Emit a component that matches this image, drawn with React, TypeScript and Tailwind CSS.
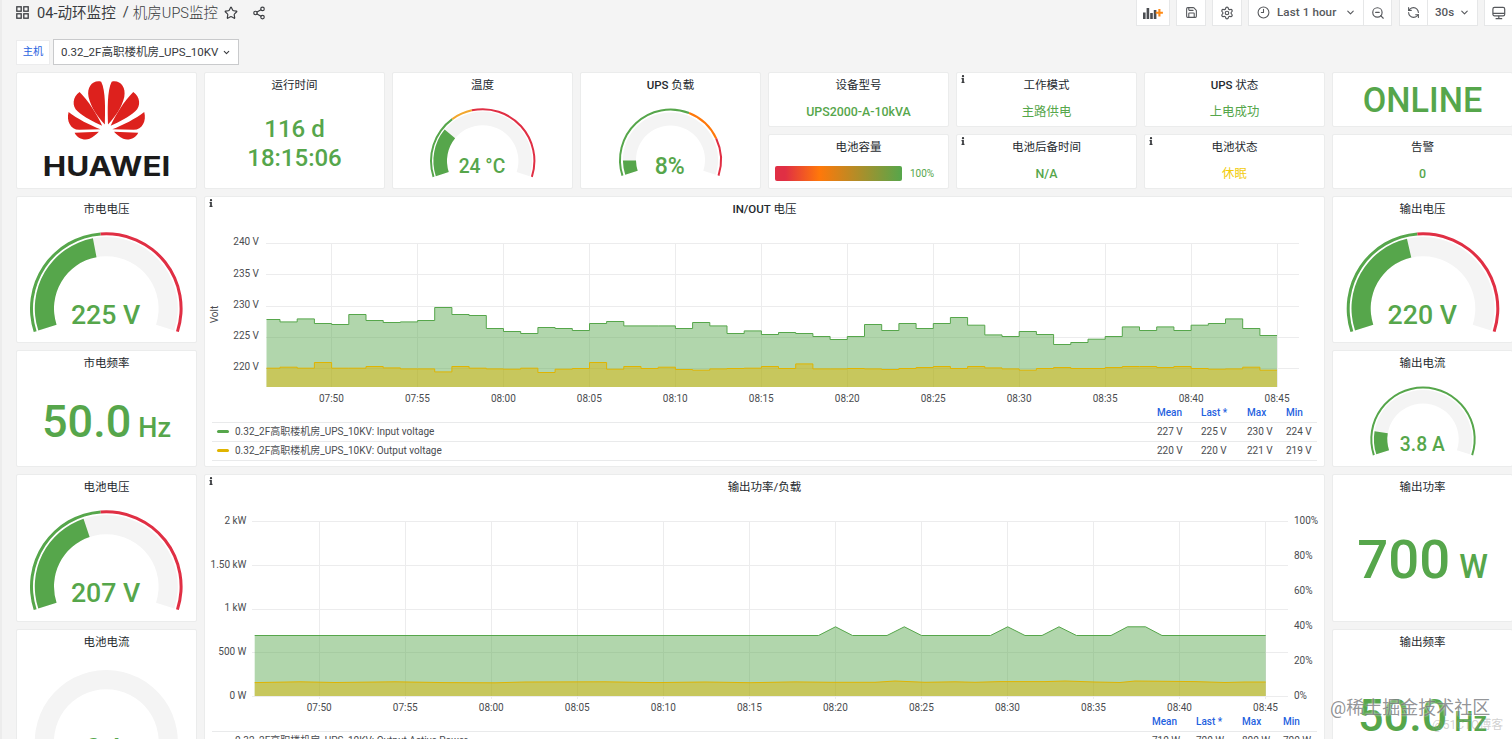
import React from 'react';
import { ChevronDown, Clock9, RefreshCcw, Save, Settings, Share2, Star, ZoomOut } from 'lucide-react';
import { FaInfo } from 'react-icons/fa';

const GREEN = '#56a64b';
const YELLOW = '#e0b400';
const ORANGE = '#ff780a';
const RED = '#e02f44';

interface PanelProps {
  title?: React.ReactNode;
  info?: boolean;
  className: string;
  children: React.ReactNode;
}

const Panel: React.FC<PanelProps> = ({ title, info, className, children }) => (
  <div className={`relative flex flex-col overflow-hidden rounded-[2px] border border-[#ebecec] bg-white ${className}`}>
    {info && <FaInfo className="absolute left-[2px] top-[2px] h-2 w-2 text-[#3b3d40]" />}
    {title && (
      <div className="flex h-[25px] shrink-0 items-center justify-center whitespace-pre pb-px text-[11.5px] leading-4 text-[#24292e]">
        {title}
      </div>
    )}
    {children}
  </div>
);

const Latin: React.FC<{ children: React.ReactNode }> = ({ children }) => (
  <span className="font-medium">{children}</span>
);

interface TextStatProps {
  value: string;
  className?: string;
}

const TextStat: React.FC<TextStatProps> = ({ value, className = 'h-7 text-[12.4px] font-medium text-[#56a64b]' }) => (
  <div className={`flex items-center justify-center pt-px leading-none ${className}`}>{value}</div>
);

interface Step {
  from: number;
  to: number;
  color: string;
}

interface GaugeProps {
  cx: number;
  cy: number;
  r: number;
  ring: number;
  outer: number;
  inner: number;
  ratio: number;
  steps: Step[];
  value: string;
  fontSize: number;
  baseline: number;
}

const polar = (cx: number, cy: number, r: number, ratio: number) => {
  const a = ((198 - ratio * 216) * Math.PI) / 180;
  return `${(cx + r * Math.cos(a)).toFixed(2)} ${(cy - r * Math.sin(a)).toFixed(2)}`;
};

const band = (cx: number, cy: number, r1: number, r2: number, from: number, to: number) => {
  const large = (to - from) * 216 > 180 ? 1 : 0;
  return [
    `M${polar(cx, cy, r1, from)}`,
    `A${r1} ${r1} 0 ${large} 1 ${polar(cx, cy, r1, to)}`,
    `L${polar(cx, cy, r2, to)}`,
    `A${r2} ${r2} 0 ${large} 0 ${polar(cx, cy, r2, from)}Z`,
  ].join('');
};

const Gauge: React.FC<GaugeProps> = ({ cx, cy, r, ring, outer, inner, ratio, steps, value, fontSize, baseline }) => (
  <svg width="179" height="122" className="shrink-0">
    <path d={band(cx, cy, outer, inner, 0, 1)} fill="#f4f4f4" />
    {ratio > 0 && <path d={band(cx, cy, outer, inner, 0, ratio)} fill={GREEN} />}
    {steps.map((s) => (
      <path key={s.from} d={band(cx, cy, r, r - ring, s.from, s.to)} fill={s.color} />
    ))}
    <text x={cx - 0.7} y={baseline} textAnchor="middle" fontSize={fontSize} fontWeight="500" fill={GREEN}>
      {value}
    </text>
  </svg>
);

const VoltGauge: React.FC<{ value: string; ratio: number; cx?: number; steps?: Step[] }> = ({
  value,
  ratio,
  cx = 89.3,
  steps = [
    { from: 0, to: 0.48, color: GREEN },
    { from: 0.48, to: 1, color: RED },
  ],
}) => (
  <Gauge cx={cx} cy={86.5} r={76.3} ring={3} outer={71.5} inner={52.3} ratio={ratio} steps={steps} value={value} fontSize={26.7} baseline={101.6} />
);

interface BigStatProps {
  value: string;
  unit: string;
  className: string;
  unitClassName: string;
}

const BigStat: React.FC<BigStatProps> = ({ value, unit, className, unitClassName }) => (
  <div className={`flex items-baseline justify-center font-medium leading-none text-[#56a64b] ${className}`}>
    <span>{value}</span>
    <span className={unitClassName}>{unit}</span>
  </div>
);

const HuaweiLogo: React.FC = () => (
  <svg width="179" height="115" viewBox="17 73 179 115">
    <defs>
      <g id="petals" fill="#dd211d">
        <path d="M324 374C323 330 321 272 335 245C360 239 379 260 373 291C366 322 346 350 324 374Z" />
        <path d="M332 378C348 342 374 302 400 276C421 290 424 319 406 334C386 352 358 366 332 378Z" />
        <path d="M337 388C368 376 408 356 433 336C440 362 428 389 401 390Z" />
        <path d="M342 396L415 399C408 415 386 424 370 417C358 412 350 404 342 396Z" />
      </g>
    </defs>
    <g transform="scale(.33333)">
      <use href="#petals" />
      <use href="#petals" transform="translate(638.5 0) scale(-1 1)" />
    </g>
    <text x="42.5" y="176.4" fontSize="27" fontWeight="700" fill="#1b1b1b" fontFamily="Inter, sans-serif" textLength="128" lengthAdjust="spacingAndGlyphs">
      HUAWEI
    </text>
  </svg>
);

// heights below the 230 V line origin, three units per pixel, one entry a minute
const inputVoltage = [
  88, 95, 86, 100, 103, 73, 91, 97, 95, 91, 52, 73, 76, 115, 124, 130, 112, 115, 121, 100, 94, 107, 107, 107, 115, 97,
  107, 130, 122, 133, 127, 130, 139, 148, 139, 103, 121, 100, 115, 100, 82, 105, 134, 139, 124, 133, 163, 157, 147, 139,
  110, 121, 110, 121, 105, 100, 86, 115, 136,
];
const outputVoltage = [
  234, 231, 234, 217, 234, 234, 229, 233, 236, 236, 245, 229, 234, 236, 237, 234, 247, 237, 235, 217, 237, 229, 235, 231,
  238, 240, 236, 235, 234, 229, 235, 221, 236, 236, 235, 236, 238, 235, 232, 229, 235, 229, 233, 236, 240, 235, 232, 235,
  235, 232, 229, 229, 232, 229, 235, 237, 236, 231, 240,
];

const times = ['07:50', '07:55', '08:00', '08:05', '08:10', '08:15', '08:20', '08:25', '08:30', '08:35', '08:40', '08:45'];

const stepLine = (samples: number[]) =>
  samples
    .map((s, i) => {
      const x1 = i === 0 ? 61.5 : 126.6 + (i - 4) * 17.19;
      const x2 = 126.6 + (i - 3) * 17.19;
      const y = (67.2 + s / 3).toFixed(1);
      return `${x1.toFixed(1)} ${y}L${x2.toFixed(1)} ${y}`;
    })
    .join('L');

const VoltChart: React.FC = () => {
  const bottom = 164;
  return (
    <svg width="1119" height="182" className="mt-px shrink-0" fontSize="10" fill="#4a4c50">
      {[240, 235, 230, 225, 220].map((v, i) => (
        <g key={v}>
          <path d={`M61 ${Math.round(20 + i * 31.3) + 0.5}H1094`} stroke="#ececed" />
          <text x="54" y={22.2 + i * 31.3} textAnchor="end">
            {v} V
          </text>
        </g>
      ))}
      {times.map((t, i) => (
        <g key={t}>
          <path d={`M${Math.round(126 + i * 85.97) + 0.5} 20V${bottom}`} stroke="#ececed" />
          <text x={126.4 + i * 85.97} y="178.6" textAnchor="middle">
            {t}
          </text>
        </g>
      ))}
      {[
        { data: inputVoltage, color: GREEN },
        { data: outputVoltage, color: YELLOW },
      ].map((s) => (
        <g key={s.color}>
          <path d={`M61.5 ${bottom}L${stepLine(s.data)}V${bottom}Z`} fill={s.color} fillOpacity=".46" />
          <path d={`M${stepLine(s.data)}`} fill="none" stroke={s.color} />
        </g>
      ))}
      <text transform="translate(12.5 91.5) rotate(-90)" textAnchor="middle">
        Volt
      </text>
    </svg>
  );
};

const loadLine =
  'M49.7 134.5H613.5L630.5 125.8L647.5 134.5H682L699.3 125.8L716.5 134.5H785.5L802.7 125.8L820 134.5H837L854 125.8L871.5 134.5H906L922.5 125.8H940.5L957 134.5H1060.7';
const batteryLine =
  'M49.7 181.6L95 180.8L130 181.5L190 180.8L240 181.6L290 181.8L320 181L400 180.8L450 181.6L500 181L545 181.7L590 180.9L625 181.3L670 181.3L690 180L720 181.3L750 180.8L770 181.3L795 180.6L840 180.6L860 180L890 181L915 181.5L930 180L990 180.6L1020 181.5L1040 181L1060.7 181';

const PowerChart: React.FC = () => (
  <svg width="1119" height="213" className="mt-px shrink-0" fontSize="10" fill="#4a4c50">
    {['2 kW', '1.50 kW', '1 kW', '500 W', '0 W'].map((label, i) => (
      <g key={label}>
        <path d={`M47 ${Math.round(20 + i * 43.75) + 0.5}H1083`} stroke="#ececed" />
        <text x="41.5" y={22.8 + i * 43.75} textAnchor="end">
          {label}
        </text>
      </g>
    ))}
    {['100%', '80%', '60%', '40%', '20%', '0%'].map((label, i) => (
      <text key={label} x="1089" y={22.8 + i * 35}>
        {label}
      </text>
    ))}
    {times.map((t, i) => (
      <g key={t}>
        <path d={`M${Math.round(114 + i * 86.03) + 0.5} 20V198`} stroke="#ececed" />
        <text x={114.2 + i * 86.03} y="209.6" textAnchor="middle">
          {t}
        </text>
      </g>
    ))}
    <path d={`${loadLine}V195H49.7Z`} fill={GREEN} fillOpacity=".46" />
    <path d={loadLine} fill="none" stroke={GREEN} />
    <path d={`${batteryLine}V195H49.7Z`} fill={YELLOW} fillOpacity=".46" />
    <path d={batteryLine} fill="none" stroke={YELLOW} />
  </svg>
);

interface LegendRow {
  name: string;
  color: string;
  values: string[];
}

const Legend: React.FC<{ columns: string; rows: LegendRow[] }> = ({ columns, rows }) => (
  <div className="mx-[7px] text-[10px] leading-none text-[#4a4c50]">
    <div className={`grid h-[18px] items-center border-b border-[#e9eaeb] font-medium text-[#1f62e0] ${columns}`}>
      <span />
      <span>Mean</span>
      <span>Last *</span>
      <span>Max</span>
      <span>Min</span>
    </div>
    {rows.map((row) => (
      <div key={row.name} className={`grid h-[19px] items-center whitespace-nowrap border-b border-[#e9eaeb] ${columns}`}>
        <div className="flex items-center">
          <span className="ml-[5px] mr-[6px] h-[3px] w-3 rounded-sm" style={{ backgroundColor: row.color }} />
          <span>{row.name}</span>
        </div>
        {row.values.map((v, i) => (
          <span key={i}>{v}</span>
        ))}
      </div>
    ))}
  </div>
);

const toolButton = 'flex h-[26px] items-center border border-t-0 border-[#e6e7e8] bg-white';

const Toolbar: React.FC = () => (
  <div className="flex h-[26px] shrink-0 items-center text-[11.6px] font-medium text-[#56585c]">
    <div className={`${toolButton} w-[34px] justify-center`}>
      <svg width="20" height="14" viewBox="0 0 20 14">
        <path d="M0 6.5h2.6V13H0zM3.6 2h2.6v11H3.6zM7.2 7h2.6v6H7.2zM10.8 4h2.6v9h-2.6z" fill="#4b4d51" />
        <path d="M16.4 3v7.4M12.7 6.7h7.2" stroke="#ff8a14" strokeWidth="2.1" />
      </svg>
    </div>
    <div className={`${toolButton} ml-[6px] w-[30px] justify-center`}>
      <Save size={13} />
    </div>
    <div className={`${toolButton} ml-[6px] w-[30px] justify-center`}>
      <Settings size={14} />
    </div>
    <div className={`${toolButton} ml-[6px] w-[116px] pl-2`}>
      <Clock9 size={13} />
      <span className="ml-[7px] flex-1 tracking-[.1px]">Last 1 hour</span>
      <ChevronDown size={11} className="mr-[7px]" strokeWidth={2.4} />
    </div>
    <div className={`${toolButton} w-[28px] justify-center border-l-0`}>
      <ZoomOut size={14} />
    </div>
    <div className={`${toolButton} ml-[7px] w-[29px] justify-center`}>
      <RefreshCcw size={13} />
    </div>
    <div className={`${toolButton} w-[50px] border-l-0 pl-[7px]`}>
      <span className="flex-1">30s</span>
      <ChevronDown size={11} className="mr-[7px]" strokeWidth={2.4} />
    </div>
    <div className={`${toolButton} ml-[6px] w-[28px] border-r-0 pl-[7px]`}>
      <svg width="14" height="14" viewBox="0 0 14 14" fill="none" stroke="currentColor" strokeWidth="1.2">
        <rect x=".9" y="1.4" width="11.8" height="8.4" rx="1.6" />
        <path d="M1 7.4h11.6M6.8 9.8v2.6M3.6 12.6h6.6" />
      </svg>
    </div>
  </div>
);

const App: React.FC = () => {
  return (
    <div className="relative h-[739px] w-[1512px] overflow-hidden border-l-2 border-[#ececec] bg-[#f4f4f4] font-[Roboto,'Noto_Sans_CJK_SC',sans-serif] text-[#24292e]">
      <div className="flex h-[26px] items-center justify-between pl-[14px]">
        <div className="flex items-center text-[14.6px] text-[#3a3c40]">
          <svg width="13" height="13" viewBox="0 0 13 13" fill="none" stroke="currentColor" strokeWidth="1.3">
            <rect x=".8" y=".8" width="4.4" height="4.4" />
            <rect x="7.8" y=".8" width="4.4" height="4.4" />
            <rect x=".8" y="7.8" width="4.4" height="4.4" />
            <rect x="7.8" y="7.8" width="4.4" height="4.4" />
          </svg>
          <span className="ml-2 pt-px">04-动环监控</span>
          <span className="ml-[7px] mr-[4px]">/</span>
          <span className="pt-px text-[14.5px] font-light">机房UPS监控</span>
          <Star size={14} className="ml-[6px]" />
          <Share2 size={14} className="ml-[14px]" />
        </div>
        <Toolbar />
      </div>

      <div className="mt-[13px] flex h-[26px] items-center pl-[14px]">
        <div className="flex h-[25px] w-[34px] items-center justify-center border border-[#ececed] bg-white text-[10.3px] text-[#1f62e0]">
          主机
        </div>
        <div className="ml-[3px] flex h-[26px] w-[186px] items-center border border-[#c9cacc] bg-white pl-[7px] text-[11.5px] text-[#36383c]">
          <span className="flex-1 whitespace-nowrap pt-px">0.32_2F高职楼机房_UPS_10KV</span>
          <ChevronDown size={9} className="mr-[7px] shrink-0" strokeWidth={2.8} />
        </div>
      </div>

      <div className="ml-[14px] mt-[7px] grid auto-rows-[23.93px] grid-cols-[repeat(8,181px)] gap-[7px]">
        <Panel className="col-start-1 row-start-1 row-span-4">
          <HuaweiLogo />
        </Panel>
        <Panel title="运行时间" className="col-start-2 row-start-1 row-span-4">
          <div className="mt-[17px] text-center text-[24px] font-medium leading-[28.8px] text-[#56a64b]">
            <div>116 d</div>
            <div>18:15:06</div>
          </div>
        </Panel>
        <Panel title="温度" className="col-start-3 row-start-1 row-span-4">
          <Gauge
            cx={89.7}
            cy={62.9}
            r={52.7}
            ring={2}
            outer={49.3}
            inner={35.7}
            ratio={0.266}
            steps={[
              { from: 0, to: 0.333, color: GREEN },
              { from: 0.333, to: 0.444, color: '#f2a72e' },
              { from: 0.444, to: 1, color: RED },
            ]}
            value="24 °C"
            fontSize={19.3}
            baseline={74.5}
          />
        </Panel>
        <Panel title={<><Latin>UPS</Latin> 负载</>} className="col-start-4 row-start-1 row-span-4">
          <Gauge
            cx={89.5}
            cy={62}
            r={51.5}
            ring={2}
            outer={47.6}
            inner={34.5}
            ratio={0.08}
            steps={[
              { from: 0, to: 0.6, color: GREEN },
              { from: 0.6, to: 0.8, color: ORANGE },
              { from: 0.8, to: 1, color: RED },
            ]}
            value="8%"
            fontSize={23}
            baseline={76}
          />
        </Panel>
        <Panel title="设备型号" className="col-start-5 row-start-1 row-span-2">
          <TextStat value="UPS2000-A-10kVA" />
        </Panel>
        <Panel title="电池容量" className="col-start-5 row-start-3 row-span-2">
          <div className="flex h-7 items-center pl-[6px] text-[10px] text-[#56a64b]">
            <div className="h-[15px] w-[127px] rounded-[2px] bg-[linear-gradient(90deg,#e02f44_8%,#ff780a_35%,#56a64b_100%)]" />
            <span className="ml-2">100%</span>
          </div>
        </Panel>
        <Panel title="工作模式" info className="col-start-6 row-start-1 row-span-2">
          <TextStat value="主路供电" className="h-7 text-[12.4px] text-[#56a64b]" />
        </Panel>
        <Panel title="电池后备时间" info className="col-start-6 row-start-3 row-span-2">
          <TextStat value="N/A" />
        </Panel>
        <Panel title={<><Latin>UPS</Latin> 状态</>} className="col-start-7 row-start-1 row-span-2">
          <TextStat value="上电成功" className="h-7 text-[12.4px] text-[#56a64b]" />
        </Panel>
        <Panel title="电池状态" info className="col-start-7 row-start-3 row-span-2">
          <TextStat value="休眠" className="h-7 text-[12.4px] text-[#f2cc0c]" />
        </Panel>
        <Panel className="col-start-8 row-start-1 row-span-2">
          <TextStat value="ONLINE" className="h-[55px] text-[34.2px] font-medium text-[#56a64b]" />
        </Panel>
        <Panel title="告警" className="col-start-8 row-start-3 row-span-2">
          <TextStat value="0" />
        </Panel>

        <Panel title="市电电压" className="col-start-1 row-start-5 row-span-5">
          <VoltGauge value="225 V" ratio={0.45} />
        </Panel>
        <Panel title="市电频率" className="col-start-1 row-start-10 row-span-4">
          <BigStat value="50.0" unit="Hz" className="mt-[23px] text-[45px]" unitClassName="ml-[7px] text-[27px]" />
        </Panel>
        <Panel title={<><Latin>IN/OUT</Latin> 电压</>} info className="col-start-2 col-span-6 row-start-5 row-span-9">
          <VoltChart />
          <Legend
            columns="grid-cols-[945px_44px_46px_39px_auto]"
            rows={[
              { name: '0.32_2F高职楼机房_UPS_10KV: Input voltage', color: GREEN, values: ['227 V', '225 V', '230 V', '224 V'] },
              { name: '0.32_2F高职楼机房_UPS_10KV: Output voltage', color: YELLOW, values: ['220 V', '220 V', '221 V', '219 V'] },
            ]}
          />
        </Panel>
        <Panel title="输出电压" className="col-start-8 row-start-5 row-span-5">
          <VoltGauge value="220 V" ratio={0.44} cx={90} />
        </Panel>
        <Panel title="输出电流" className="col-start-8 row-start-10 row-span-4">
          <Gauge
            cx={90}
            cy={63.2}
            r={52.7}
            ring={2}
            outer={49.1}
            inner={35.7}
            ratio={0.127}
            steps={[{ from: 0, to: 1, color: GREEN }]}
            value="3.8 A"
            fontSize={19.3}
            baseline={74.5}
          />
        </Panel>

        <Panel title="电池电压" className="col-start-1 row-start-14 row-span-5">
          <VoltGauge value="207 V" ratio={0.414} />
        </Panel>
        <Panel title="电池电流" className="col-start-1 row-start-19 row-span-5">
          <VoltGauge value="0 A" ratio={0} steps={[]} />
        </Panel>
        <Panel title="输出功率/负载" info className="col-start-2 col-span-6 row-start-14 row-span-9">
          <PowerChart />
          <Legend
            columns="grid-cols-[940px_44px_46px_41px_auto]"
            rows={[
              { name: '0.32_2F高职楼机房_UPS_10KV: Output Active Power', color: GREEN, values: ['710 W', '700 W', '800 W', '700 W'] },
            ]}
          />
        </Panel>
        <Panel title="输出功率" className="col-start-8 row-start-14 row-span-5">
          <BigStat value="700" unit="W" className="mt-[32px] text-[54.5px]" unitClassName="ml-[9px] text-[32.5px]" />
        </Panel>
        <Panel title="输出频率" className="col-start-8 row-start-19 row-span-5">
          <BigStat value="50.0" unit="Hz" className="mt-[38px] text-[45px]" unitClassName="ml-[7px] text-[27px]" />
        </Panel>
      </div>

      <div className="absolute left-[1328px] top-[696px] whitespace-nowrap text-[18px] leading-6 text-[#55585c]/65 [text-shadow:0_0_2px_#fff]">
        @稀土掘金技术社区
      </div>
      <div className="absolute left-[1430px] top-[717px] whitespace-nowrap text-[12px] leading-4 text-[#999]/45">
        @51CTO博客
      </div>
    </div>
  );
};

export default App;
